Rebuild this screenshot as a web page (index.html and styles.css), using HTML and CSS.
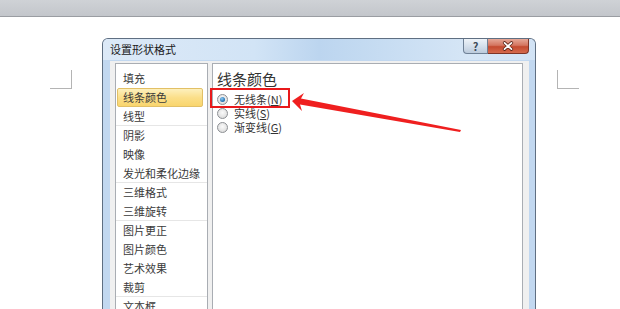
FILE: index.html
```html
<!DOCTYPE html>
<html lang="zh-CN">
<head>
  <meta charset="UTF-8">
  <title>设置形状格式</title>
  <link rel="stylesheet" href="styles.css">
</head>
<body>
  <div class="topbar"></div>
  <div class="page">
    <span class="mark mark-left"></span>
    <span class="mark mark-right"></span>

    <div class="dialog">
      <div class="titlebar">
        <span class="title">设置形状格式</span>
        <div class="caption-btns">
          <span class="cbtn help">?</span>
          <span class="cbtn close">
            <svg width="14" height="10" viewBox="0 0 14 10">
              <path d="M3.5 1.8 L10.5 8.2 M10.5 1.8 L3.5 8.2" stroke="#5a2418" stroke-width="3.2" stroke-linecap="round"/>
              <path d="M3.5 1.8 L10.5 8.2 M10.5 1.8 L3.5 8.2" stroke="#fff" stroke-width="1.7" stroke-linecap="round"/>
            </svg>
          </span>
        </div>
      </div>

      <div class="client">
        <ul class="nav">
          <li>填充</li>
          <li class="active">线条颜色</li>
          <li class="sep">线型</li>
          <li>阴影</li>
          <li>映像</li>
          <li class="sep">发光和柔化边缘</li>
          <li>三维格式</li>
          <li class="sep">三维旋转</li>
          <li>图片更正</li>
          <li>图片颜色</li>
          <li>艺术效果</li>
          <li class="sep">裁剪</li>
          <li>文本框</li>
        </ul>

        <div class="panel">
          <h2>线条颜色</h2>
          <label class="opt"><span class="radio checked"></span>无线条(<u>N</u>)</label>
          <label class="opt"><span class="radio"></span>实线(<u>S</u>)</label>
          <label class="opt"><span class="radio"></span>渐变线(<u>G</u>)</label>
        </div>
      </div>
    </div>
  </div>

  <!-- annotation on top of the screenshot -->
  <span class="callout"></span>
  <svg class="arrow" width="620" height="309" viewBox="0 0 620 309">
    <polygon points="292,101 304,93 301,98.5 461,130 460,132 300,104.5 302,111" fill="#ef1f1f"/>
  </svg>
</body>
</html>
```

FILE: styles.css
```css
body {
  margin: 0;
  width: 620px;
  height: 309px;
  overflow: hidden;
  position: relative;
  background: #fff;
  font-family: "Noto Sans CJK SC", "Noto Sans", sans-serif;
  color: #333;
}
.topbar {
  height: 16px;
  background: linear-gradient(to bottom, #cfd2d6, #c3c6cb);
  border-bottom: 1px solid #9a9da2;
}
.page {
  position: relative;
  height: 292px;
  overflow: hidden;
}
.mark {
  position: absolute;
  top: 53px;
  width: 21px;
  height: 18px;
  border-bottom: 1px solid #b4b4b4;
}
.mark-left {
  left: 50px;
  border-right: 1px solid #b4b4b4;
}
.mark-right {
  left: 557px;
  border-left: 1px solid #b4b4b4;
}

.dialog {
  margin-left: 102px;
  margin-top: 21px;
  width: 432px;
  height: 271px;
  border: 1px solid #5f6f82;
  border-bottom: none;
  border-radius: 6px 6px 0 0;
  background: #c2d8f0;
  display: flex;
  flex-direction: column;
}
.titlebar {
  height: 21px;
  display: flex;
  justify-content: space-between;
  align-items: flex-start;
  padding: 0 6px 0 7px;
  border-radius: 5px 5px 0 0;
  background: linear-gradient(to right, #dce9f7 0%, #d2e4f6 35%, #bcd5ef 50%, #c3daf1 60%, #d6e6f6 85%, #d2e3f5 100%);
}
.title {
  font-size: 11px;
  line-height: 21px;
  color: #1b1b1b;
}
.caption-btns {
  display: flex;
}
.cbtn {
  height: 15px;
  display: flex;
  align-items: center;
  justify-content: center;
  box-sizing: border-box;
}
.help {
  width: 25px;
  border: 1px solid #6f8196;
  border-top: none;
  border-radius: 0 0 0 4px;
  background: linear-gradient(to bottom, #eef3f8, #d5e0ec 50%, #bccbdc);
  font-size: 11px;
  font-weight: bold;
  color: #3d4a59;
}
.close {
  width: 41px;
  border: 1px solid #7e3426;
  border-top: none;
  border-left: none;
  border-radius: 0 0 4px 0;
  background: linear-gradient(to bottom, #e6a898, #d47560 45%, #c44a30 55%, #d56a4d);
}

.client {
  flex: 1;
  margin: 1px 6px 0 7px;
  padding: 2px 6px 0 5px;
  background: #f0f0f0;
  display: flex;
  min-height: 0;
}
.nav {
  list-style: none;
  margin: 0;
  padding: 5px 4px 0 0;
  width: 87px;
  background: #fff;
  border: 1px solid #a9adb3;
  border-bottom: none;
  overflow: hidden;
  font-size: 11px;
}
.nav li {
  height: 19px;
  line-height: 19px;
  padding-left: 7px;
  box-sizing: border-box;
  white-space: nowrap;
  color: #3a3a3a;
}
.nav li.sep {
  border-bottom: 1px solid #e6e6e6;
  margin-right: -4px;
}
.nav li.active {
  margin-left: 1px;
  padding-left: 5px;
  border: 1px solid #e2c066;
  border-radius: 2px;
  line-height: 17px;
  background: linear-gradient(to bottom, #fdf0bd, #fbdf8a 50%, #f9d56d);
}
.panel {
  flex: 1;
  margin-left: 4px;
  padding: 6px 0 0 4px;
  background: #fff;
  border: 1px solid #a9adb3;
  border-bottom: none;
}
.panel h2 {
  margin: 0 0 4px;
  font-size: 15px;
  font-weight: normal;
  line-height: 18px;
  color: #333;
}
.opt {
  display: flex;
  align-items: center;
  height: 14px;
  line-height: 14px;
  font-size: 11px;
  color: #333;
}
.opt u {
  text-underline-offset: 1px;
}
.radio {
  width: 11px;
  height: 11px;
  margin-right: 6px;
  border-radius: 50%;
  border: 1px solid #8d9094;
  box-sizing: border-box;
  background: radial-gradient(circle at 50% 40%, #fafafa, #e4e4e4 60%, #cfcfcf);
  display: flex;
  align-items: center;
  justify-content: center;
}
.radio.checked::after {
  content: "";
  width: 5px;
  height: 5px;
  border-radius: 50%;
  background: radial-gradient(circle at 40% 35%, #8cc8f2, #1d6fb0 70%);
}

.callout {
  position: absolute;
  left: 210px;
  top: 88px;
  width: 80px;
  height: 20px;
  box-sizing: border-box;
  border: 2px solid #e8191b;
}
.arrow {
  position: absolute;
  left: 0;
  top: 0;
}
```
